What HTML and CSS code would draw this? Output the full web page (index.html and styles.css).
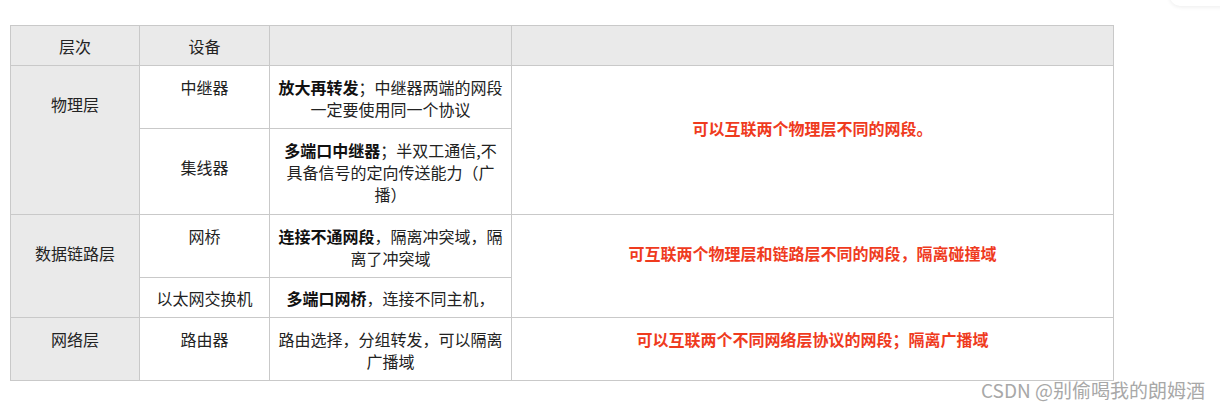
FILE: index.html
```html
<!DOCTYPE html>
<html lang="zh-CN">
<head>
<meta charset="utf-8">
<title>网络设备</title>
<link rel="stylesheet" href="styles.css">
</head>
<body>
<div class="page">
  <table class="net-table">
    <colgroup>
      <col class="c1"><col class="c2"><col class="c3"><col class="c4">
    </colgroup>
    <thead>
      <tr>
        <th>层次</th>
        <th>设备</th>
        <th></th>
        <th></th>
      </tr>
    </thead>
    <tbody>
      <tr>
        <td class="layer pad-mid" rowspan="2">物理层</td>
        <td>中继器</td>
        <td><b>放大再转发</b>；中继器两端的网段一定要使用同一个协议</td>
        <td class="note pad-big" rowspan="2">可以互联两个物理层不同的网段。</td>
      </tr>
      <tr class="row-tall">
        <td class="pad-dev">集线器</td>
        <td><b>多端口中继器</b>；半双工通信,不具备信号的定向传送能力（广播）</td>
      </tr>
      <tr>
        <td class="layer pad-mid" rowspan="2">数据链路层</td>
        <td>网桥</td>
        <td><b>连接不通网段</b>，隔离冲突域，隔离了冲突域</td>
        <td class="note pad-mid" rowspan="2">可互联两个物理层和链路层不同的网段，隔离碰撞域</td>
      </tr>
      <tr class="row-short">
        <td>以太网交换机</td>
        <td><b>多端口网桥</b>，连接不同主机，</td>
      </tr>
      <tr>
        <td class="layer">网络层</td>
        <td>路由器</td>
        <td>路由选择，分组转发，可以隔离广播域</td>
        <td class="note">可以互联两个不同网络层协议的网段；隔离广播域</td>
      </tr>
    </tbody>
  </table>
  <div class="watermark">CSDN @别偷喝我的朗姆酒</div>
  <div class="corner"></div>
</div>
</body>
</html>
```

FILE: styles.css
```css
html, body {
  margin: 0;
  padding: 0;
  background: #ffffff;
}

body {
  font-family: "Microsoft YaHei", "Noto Sans CJK SC", "Noto Sans", sans-serif;
  color: #222222;
}

.page {
  position: relative;
  width: 1220px;
  height: 411px;
  padding: 25px 0 0 10px;
  box-sizing: border-box;
  overflow: hidden;
}

.net-table {
  border-collapse: collapse;
  table-layout: fixed;
  width: 1103px;
  font-size: 16px;
  line-height: 22px;
}

.c1 { width: 129px; }
.c2 { width: 130px; }
.c3 { width: 242px; }
.c4 { width: 602px; }

.net-table th,
.net-table td {
  border: 1px solid #c9c9c9;
  padding: 10px 8px 8px;
  text-align: center;
  vertical-align: top;
  font-weight: normal;
}

.net-table th {
  background: #eaeaea;
  padding: 9px 8px 8px;
}

.net-table td.layer {
  background: #eaeaea;
}

.net-table b {
  font-weight: bold;
  color: #111111;
}

.net-table .row-tall td { padding-bottom: 9px; }
.net-table .row-short td { padding-top: 9px; }

.net-table td.pad-mid { padding-top: 27px; }
.net-table td.pad-big { padding-top: 51px; }
.net-table .row-tall td.pad-dev { padding-top: 27px; }

.net-table td.note {
  color: #ef3b1e;
  font-weight: bold;
}

.watermark {
  position: absolute;
  right: 15px;
  top: 378px;
  font-size: 19px;
  line-height: 24px;
  color: #a8a8a8;
}

.corner {
  position: absolute;
  right: -20px;
  top: -40px;
  width: 70px;
  height: 46px;
  border-radius: 10px;
  background: #ffffff;
  box-shadow: 0 1px 4px rgba(0, 0, 0, 0.08);
}
```
